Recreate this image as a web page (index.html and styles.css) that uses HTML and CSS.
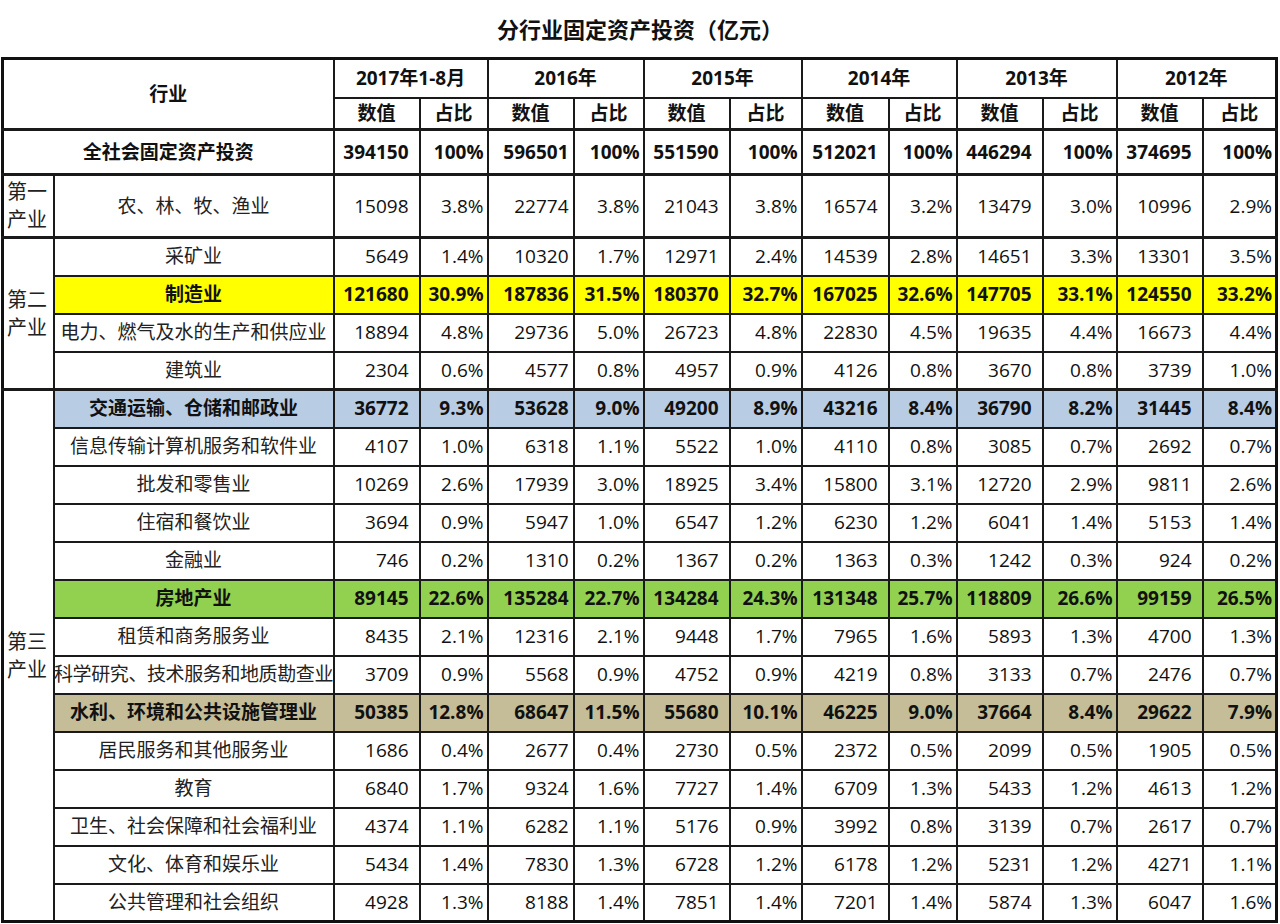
FILE: index.html
```html
<!DOCTYPE html>
<html lang="zh-CN">
<head>
<meta charset="utf-8">
<title>分行业固定资产投资</title>
<link rel="stylesheet" href="styles.css">
</head>
<body>
<h1 class="title">分行业固定资产投资（亿元）</h1>
<table class="sheet">
  <colgroup>
    <col class="c-sec"><col class="c-name">
    <col class="c-v"><col class="c-p1">
    <col class="c-v"><col class="c-p2">
    <col class="c-v"><col class="c-p3">
    <col class="c-v2"><col class="c-p4">
    <col class="c-v"><col class="c-p5">
    <col class="c-v"><col class="c-p6">
  </colgroup>
  <thead>
    <tr class="r-h1">
      <th colspan="2" rowspan="2">行业</th>
      <th colspan="2">2017年1-8月</th>
      <th colspan="2">2016年</th>
      <th colspan="2">2015年</th>
      <th colspan="2">2014年</th>
      <th colspan="2">2013年</th>
      <th colspan="2">2012年</th>
    </tr>
    <tr class="r-h2">
      <th>数值</th><th>占比</th>
      <th>数值</th><th>占比</th>
      <th>数值</th><th>占比</th>
      <th>数值</th><th>占比</th>
      <th>数值</th><th>占比</th>
      <th>数值</th><th>占比</th>
    </tr>
  </thead>
  <tbody>
    <tr class="r-total sep">
      <th colspan="2" class="name">全社会固定资产投资</th>
      <td>394150</td><td>100%</td><td>596501</td><td>100%</td><td>551590</td><td>100%</td><td>512021</td><td>100%</td><td>446294</td><td>100%</td><td>374695</td><td>100%</td>
    </tr>
    <tr class="r-first sep">
      <th class="sec">第一产业</th>
      <th class="name"><div class="lbl">农、林、牧、渔业</div></th>
      <td>15098</td><td>3.8%</td><td>22774</td><td>3.8%</td><td>21043</td><td>3.8%</td><td>16574</td><td>3.2%</td><td>13479</td><td>3.0%</td><td>10996</td><td>2.9%</td>
    </tr>
    <tr class="sep">
      <th class="sec" rowspan="4">第二产业</th>
      <th class="name"><div class="lbl">采矿业</div></th>
      <td>5649</td><td>1.4%</td><td>10320</td><td>1.7%</td><td>12971</td><td>2.4%</td><td>14539</td><td>2.8%</td><td>14651</td><td>3.3%</td><td>13301</td><td>3.5%</td>
    </tr>
    <tr class="hl hl-yellow">
      <th class="name"><div class="lbl">制造业</div></th>
      <td>121680</td><td>30.9%</td><td>187836</td><td>31.5%</td><td>180370</td><td>32.7%</td><td>167025</td><td>32.6%</td><td>147705</td><td>33.1%</td><td>124550</td><td>33.2%</td>
    </tr>
    <tr>
      <th class="name"><div class="lbl">电力、燃气及水的生产和供应业</div></th>
      <td>18894</td><td>4.8%</td><td>29736</td><td>5.0%</td><td>26723</td><td>4.8%</td><td>22830</td><td>4.5%</td><td>19635</td><td>4.4%</td><td>16673</td><td>4.4%</td>
    </tr>
    <tr>
      <th class="name"><div class="lbl">建筑业</div></th>
      <td>2304</td><td>0.6%</td><td>4577</td><td>0.8%</td><td>4957</td><td>0.9%</td><td>4126</td><td>0.8%</td><td>3670</td><td>0.8%</td><td>3739</td><td>1.0%</td>
    </tr>
    <tr class="sep hl hl-blue">
      <th class="sec" rowspan="14">第三产业</th>
      <th class="name"><div class="lbl">交通运输、仓储和邮政业</div></th>
      <td>36772</td><td>9.3%</td><td>53628</td><td>9.0%</td><td>49200</td><td>8.9%</td><td>43216</td><td>8.4%</td><td>36790</td><td>8.2%</td><td>31445</td><td>8.4%</td>
    </tr>
    <tr>
      <th class="name"><div class="lbl">信息传输计算机服务和软件业</div></th>
      <td>4107</td><td>1.0%</td><td>6318</td><td>1.1%</td><td>5522</td><td>1.0%</td><td>4110</td><td>0.8%</td><td>3085</td><td>0.7%</td><td>2692</td><td>0.7%</td>
    </tr>
    <tr>
      <th class="name"><div class="lbl">批发和零售业</div></th>
      <td>10269</td><td>2.6%</td><td>17939</td><td>3.0%</td><td>18925</td><td>3.4%</td><td>15800</td><td>3.1%</td><td>12720</td><td>2.9%</td><td>9811</td><td>2.6%</td>
    </tr>
    <tr>
      <th class="name"><div class="lbl">住宿和餐饮业</div></th>
      <td>3694</td><td>0.9%</td><td>5947</td><td>1.0%</td><td>6547</td><td>1.2%</td><td>6230</td><td>1.2%</td><td>6041</td><td>1.4%</td><td>5153</td><td>1.4%</td>
    </tr>
    <tr>
      <th class="name"><div class="lbl">金融业</div></th>
      <td>746</td><td>0.2%</td><td>1310</td><td>0.2%</td><td>1367</td><td>0.2%</td><td>1363</td><td>0.3%</td><td>1242</td><td>0.3%</td><td>924</td><td>0.2%</td>
    </tr>
    <tr class="hl hl-green">
      <th class="name"><div class="lbl">房地产业</div></th>
      <td>89145</td><td>22.6%</td><td>135284</td><td>22.7%</td><td>134284</td><td>24.3%</td><td>131348</td><td>25.7%</td><td>118809</td><td>26.6%</td><td>99159</td><td>26.5%</td>
    </tr>
    <tr>
      <th class="name"><div class="lbl">租赁和商务服务业</div></th>
      <td>8435</td><td>2.1%</td><td>12316</td><td>2.1%</td><td>9448</td><td>1.7%</td><td>7965</td><td>1.6%</td><td>5893</td><td>1.3%</td><td>4700</td><td>1.3%</td>
    </tr>
    <tr>
      <th class="name"><div class="lbl lbl-tight">科学研究、技术服务和地质勘查业</div></th>
      <td>3709</td><td>0.9%</td><td>5568</td><td>0.9%</td><td>4752</td><td>0.9%</td><td>4219</td><td>0.8%</td><td>3133</td><td>0.7%</td><td>2476</td><td>0.7%</td>
    </tr>
    <tr class="hl hl-tan">
      <th class="name"><div class="lbl">水利、环境和公共设施管理业</div></th>
      <td>50385</td><td>12.8%</td><td>68647</td><td>11.5%</td><td>55680</td><td>10.1%</td><td>46225</td><td>9.0%</td><td>37664</td><td>8.4%</td><td>29622</td><td>7.9%</td>
    </tr>
    <tr>
      <th class="name"><div class="lbl">居民服务和其他服务业</div></th>
      <td>1686</td><td>0.4%</td><td>2677</td><td>0.4%</td><td>2730</td><td>0.5%</td><td>2372</td><td>0.5%</td><td>2099</td><td>0.5%</td><td>1905</td><td>0.5%</td>
    </tr>
    <tr>
      <th class="name"><div class="lbl">教育</div></th>
      <td>6840</td><td>1.7%</td><td>9324</td><td>1.6%</td><td>7727</td><td>1.4%</td><td>6709</td><td>1.3%</td><td>5433</td><td>1.2%</td><td>4613</td><td>1.2%</td>
    </tr>
    <tr>
      <th class="name"><div class="lbl">卫生、社会保障和社会福利业</div></th>
      <td>4374</td><td>1.1%</td><td>6282</td><td>1.1%</td><td>5176</td><td>0.9%</td><td>3992</td><td>0.8%</td><td>3139</td><td>0.7%</td><td>2617</td><td>0.7%</td>
    </tr>
    <tr>
      <th class="name"><div class="lbl">文化、体育和娱乐业</div></th>
      <td>5434</td><td>1.4%</td><td>7830</td><td>1.3%</td><td>6728</td><td>1.2%</td><td>6178</td><td>1.2%</td><td>5231</td><td>1.2%</td><td>4271</td><td>1.1%</td>
    </tr>
    <tr>
      <th class="name"><div class="lbl">公共管理和社会组织</div></th>
      <td>4928</td><td>1.3%</td><td>8188</td><td>1.4%</td><td>7851</td><td>1.4%</td><td>7201</td><td>1.4%</td><td>5874</td><td>1.3%</td><td>6047</td><td>1.6%</td>
    </tr>
  </tbody>
</table>
</body>
</html>
```

FILE: styles.css
```css
html, body {
  margin: 0;
  padding: 0;
  background: #ffffff;
}

body {
  font-family: "Open Sans", "Noto Sans CJK SC", sans-serif;
  color: #1a1a1a;
}

.title {
  margin: 0;
  height: 57px;
  display: flex;
  align-items: center;
  justify-content: center;
  padding-bottom: 2px;
  box-sizing: border-box;
  font-size: 22px;
  font-weight: 700;
  color: #111;
}

.sheet {
  border-collapse: collapse;
  table-layout: fixed;
  width: 1276px;
  margin-left: 1px;
  border: 3px solid #111;
  font-size: 19px;
}

.c-sec { width: 51px; }
.c-name { width: 280px; }
.c-v { width: 86px; }
.c-v2 { width: 87px; }
.c-p1 { width: 68px; }
.c-p2 { width: 70px; }
.c-p3 { width: 72px; }
.c-p4 { width: 68px; }
.c-p5 { width: 74px; }
.c-p6 { width: 74px; }

.sheet th,
.sheet td {
  border: 2px solid #1a1a1a;
  padding: 0;
  line-height: 1.4;
  vertical-align: middle;
  white-space: nowrap;
}

.sheet thead th {
  font-weight: 700;
  text-align: center;
  color: #111;
}

.r-h1 { height: 39px; }
.r-h2 { height: 32px; }
.sheet tbody tr { height: 38px; }
.sheet tbody tr.r-total { height: 45px; }
.sheet tbody tr.r-first { height: 63px; }

.sheet thead tr.r-h2 th { border-bottom-width: 3px; }
.sheet tbody tr.sep > th,
.sheet tbody tr.sep > td { border-top-width: 3px; }

.sheet tbody td {
  text-align: right;
  color: #111;
}
.sheet tbody td:nth-last-child(even) { padding-right: 10px; }
.sheet tbody td:nth-last-child(10) { padding-right: 4px; }
.sheet tbody td:nth-last-child(odd) { padding-right: 3px; }

.sheet th.name {
  font-weight: 400;
  text-align: center;
  color: #222;
}

.lbl {
  display: flex;
  justify-content: center;
  overflow: hidden;
  white-space: nowrap;
}

.lbl-tight {
  letter-spacing: -0.4px;
}

.sheet th.sec {
  font-weight: 400;
  white-space: normal;
  text-align: left;
  padding-left: 3px;
  font-size: 20px;
  color: #222;
  line-height: 28px;
}

.r-total > th.name,
.r-total > td,
.hl > th.name,
.hl > td {
  font-weight: 700;
  color: #111;
}

.hl-yellow > th.name, .hl-yellow > td { background: #ffff00; }
.hl-blue > th.name, .hl-blue > td { background: #b8cce4; }
.hl-green > th.name, .hl-green > td { background: #92d050; }
.hl-tan > th.name, .hl-tan > td { background: #c4bd97; }
```
